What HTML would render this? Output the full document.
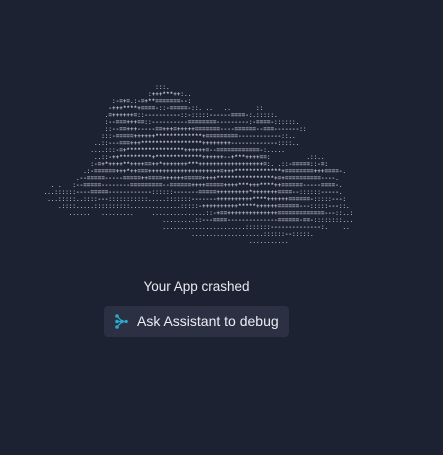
<!DOCTYPE html>
<html><head><style>
html,body{margin:0;padding:0;background:#1d2233;width:443px;height:455px;overflow:hidden;font-family:"Liberation Sans",sans-serif}
pre{position:absolute;left:40px;top:84px;margin:0;font-family:"Liberation Mono",monospace;font-size:6px;line-height:7px;color:#c3c8d1;font-weight:bold;letter-spacing:0}
.t{position:absolute;left:0;width:393px;top:279px;text-align:center;color:#e8eaee;font-size:13.5px}
.b{position:absolute;left:104px;top:306px;width:185px;height:31px;background:#2b3143;border-radius:4px}
.b span{position:absolute;left:33px;top:7px;color:#eceef2;font-size:14px}
.b svg{position:absolute;left:11px;top:8px}
</style></head><body>
<pre>                                :::.
                              :+++***++:..
                    :-=+=.:-=+**=======--:
                   -+++****+====-::-=====-::. ..   ..       ::
                  .=++++++=::----------::-:::::------====-:.:::::.
                  :--===+++==::----------========---------:-====-::::::.
                  ::--==+++-----==+++=+++++=======----======--===-------::
                 :::-=====++++++*************+=========------------::..
               ..::---===+++*****************++++++++-------------::::..
              ....:::-=+****************++++++=--============-:.....
               ..::-++*********+*************++++++--+***++++==:          .::..
              :-=+*++++**++++==++*+++++++***++++++++++++++++++=:. .::-=====::-=:
            .:-======+++*++===++++++++++++++++++++=+++*************+========+++====-.
          .--=====-----=====++====++++++=====++++****************+=+==========----.
   . .   :--=====--------=========--======++++=====++++***+++****++======-----====-.
 ...::::::----=====------------::::::-------=====+++++++++*+++++++====--::::::-----.
  ...:::::..::::---:::::::::::.....:::::::-------++++++++++****++++++======-:::::---:
     .::::.....::::::::::..............:::::-++++++++++*****++++++======---:::::---::.
        ......   .........     ...............::-+==++++++++++++++=============---::..:
                                  .........::---====--------------======-==-::::::::...
                                  .......................:::::::--------------:.    ..
                                          ....................::::::--:::::.
                                                          ...........</pre>
<div class="t">Your App crashed</div>
<div class="b"><svg width="13" height="15" viewBox="0 0 13 15"><g fill="#2aa9cc"><circle cx="2" cy="2" r="1.8"/><circle cx="2" cy="7.5" r="1.8"/><circle cx="2" cy="13" r="1.8"/><circle cx="7" cy="7.5" r="1.8"/><circle cx="11.2" cy="7.5" r="1.6"/></g><path d="M2 2L7 7.5L2 13M2 7.5H11" stroke="#2aa9cc" stroke-width="1.3" fill="none"/></svg><span>Ask Assistant to debug</span></div>
</body></html>
